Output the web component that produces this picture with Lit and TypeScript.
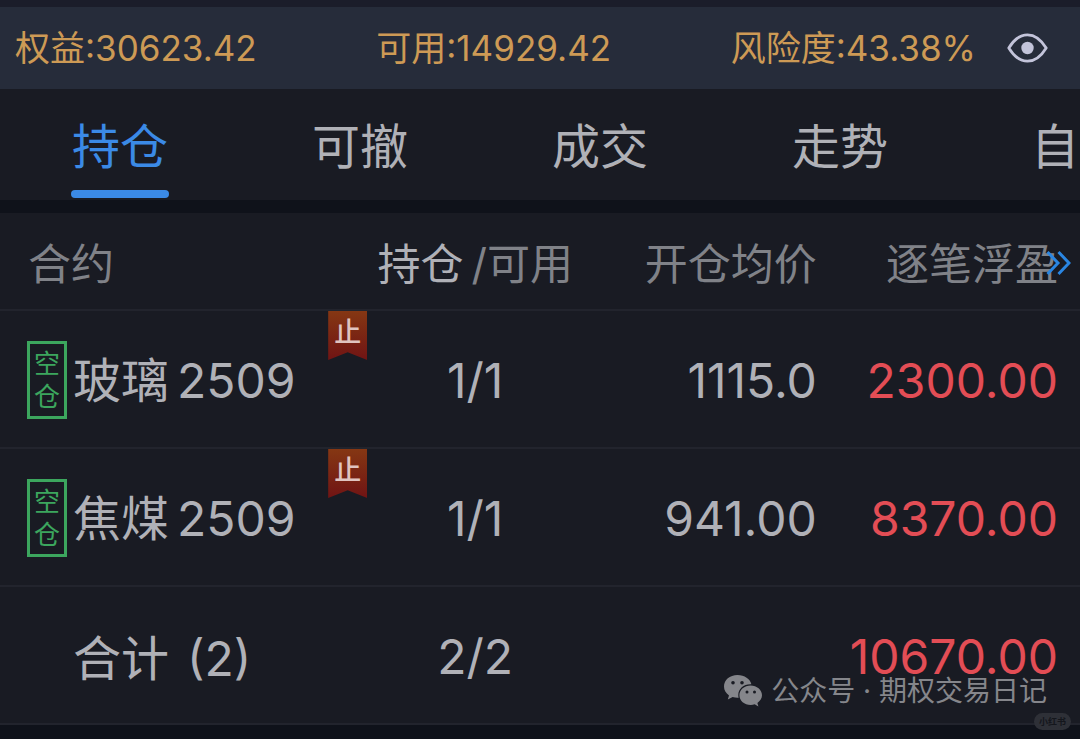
import { LitElement, html, css } from "lit";
import { customElement, state } from "lit/decorators.js";
import { classMap } from "lit/directives/class-map.js";

interface Position {
  name: string;
  code: string;
  volume: string;
  price: string;
  profit: string;
}

const TABS = ["持仓", "可撤", "成交", "走势", "自"];

const POSITIONS: Position[] = [
  { name: "玻璃", code: "2509", volume: "1/1", price: "1115.0", profit: "2300.00" },
  { name: "焦煤", code: "2509", volume: "1/1", price: "941.00", profit: "8370.00" },
];

@customElement("app-root")
export class AppRoot extends LitElement {
  @state() private active = 0;

  static styles = css`
    :host {
      display: block;
      min-height: 100vh;
      box-sizing: border-box;
      position: relative;
      overflow: hidden;
      background: #0f121a;
      color: #b0b1b7;
      font-family: Inter, "Noto Sans CJK SC", sans-serif;
      font-weight: 400;
    }
    button {
      margin: 0;
      padding: 0;
      border: 0;
      background: none;
      color: inherit;
      font: inherit;
      cursor: pointer;
    }
    .account {
      display: flex;
      justify-content: space-between;
      align-items: center;
      height: 82px;
      padding: 0 32px 0 15px;
      border-top: 7px solid #1b1d2a;
      background: #262c3a;
      color: #cd9a55;
      font-size: 35px;
      line-height: 48px;
      white-space: nowrap;
    }
    .risk {
      display: flex;
      align-items: center;
      gap: 31px;
    }
    .eye {
      display: flex;
      color: #c3c4da;
    }
    .tabs {
      display: grid;
      grid-template-columns: 2fr 2fr 2fr 2fr 1fr;
      height: 111px;
      background: #191b23;
      font-size: 48px;
      line-height: 64px;
    }
    .tab {
      display: flex;
      justify-content: center;
      white-space: nowrap;
    }
    .tab:last-child {
      justify-content: flex-end;
    }
    .label {
      padding: 26px 1px 0;
    }
    .active {
      color: #3b8ae6;
    }
    .bar {
      display: block;
      height: 8px;
      margin: 11px -1px 0;
      border-radius: 4px;
    }
    .active .bar {
      background: #3b8ae6;
    }
    .table {
      width: 100%;
      margin-top: 13px;
      border-collapse: separate;
      border-spacing: 0;
      table-layout: fixed;
      background: #191b23;
      font-size: 48px;
      line-height: 64px;
      white-space: nowrap;
    }
    th,
    td {
      box-sizing: border-box;
      height: 138px;
      padding: 0;
      border-bottom: 2px solid #22242d;
      font-weight: 400;
      text-align: right;
      vertical-align: middle;
    }
    .head {
      color: #808288;
      font-size: 43px;
    }
    .head th {
      height: 98px;
      padding-top: 6px;
    }
    .col-name {
      width: 34%;
      text-align: left;
    }
    .col-volume {
      width: 20%;
      text-align: center;
    }
    .col-price {
      width: 22%;
      padding-right: 4px;
    }
    .col-profit {
      width: 24%;
      padding-right: 22px;
    }
    .head .col-name {
      padding-left: 28px;
    }
    .strong {
      margin-right: 8px;
      color: #b0b1b7;
    }
    .more {
      position: absolute;
      top: 250px;
      right: 9px;
      display: flex;
      color: #2a86e2;
    }
    .contract {
      display: flex;
      align-items: center;
      position: relative;
      height: 136px;
      padding-left: 27px;
      gap: 6px;
    }
    .side {
      display: flex;
      flex-direction: column;
      justify-content: center;
      align-items: center;
      box-sizing: border-box;
      width: 40px;
      height: 78px;
      margin-top: 2px;
      border: 3px solid #3ca65e;
      color: #3ca65e;
      font-size: 26px;
      line-height: 33px;
    }
    .title {
      display: flex;
      gap: 8px;
      padding-top: 4px;
    }
    .stop {
      position: absolute;
      top: 0;
      right: 0;
      width: 39px;
      height: 49px;
      clip-path: polygon(0 0, 100% 0, 100% 100%, 50% 84%, 0 100%);
      background: linear-gradient(#853713, #701414);
      color: #e0c4c0;
      font-size: 27px;
      font-weight: 500;
      line-height: 44px;
      text-align: center;
    }
    .num {
      padding-top: 4px;
    }
    .profit {
      color: #e34d55;
    }
    .total {
      padding-top: 8px;
      padding-left: 73px;
    }
    .count {
      margin-left: 18px;
    }
    .credit {
      position: absolute;
      top: 671px;
      right: 33px;
      display: flex;
      align-items: center;
      gap: 8px;
      color: #85868b;
      font-size: 28px;
      line-height: 40px;
      white-space: nowrap;
    }
    .mark {
      position: absolute;
      top: 713px;
      right: 9px;
      padding: 0 5px;
      border-radius: 9px;
      background: #2e3037;
      color: #14161c;
      font-size: 9px;
      line-height: 17px;
      font-weight: 700;
    }
  `;

  private renderRow(p: Position) {
    return html`
      <tr>
        <td class="col-name">
          <div class="contract">
            <span class="side"><span>空</span><span>仓</span></span>
            <span class="title"><span>${p.name}</span><span>${p.code}</span></span>
            <span class="stop">止</span>
          </div>
        </td>
        <td class="num col-volume">${p.volume}</td>
        <td class="num col-price">${p.price}</td>
        <td class="num col-profit profit">${p.profit}</td>
      </tr>
    `;
  }

  render() {
    return html`
      <header class="account">
        <span>权益:30623.42</span>
        <span>可用:14929.42</span>
        <span class="risk">
          <span>风险度:43.38%</span>
          <button class="eye" aria-label="显示金额">
            <svg width="41" height="30" viewBox="0 0 41 30" fill="none" stroke="currentColor" stroke-width="2.8">
              <path d="M1.8 15C7 6.5 13 1.8 20.5 1.8S34 6.5 39.2 15C34 23.5 28 28.2 20.5 28.2S7 23.5 1.8 15Z" stroke-linejoin="round" />
              <circle cx="20.5" cy="15" r="6.2" fill="currentColor" stroke="none" />
            </svg>
          </button>
        </span>
      </header>
      <nav class="tabs">
        ${TABS.map(
          (t, i) => html`
            <button class=${classMap({ tab: true, active: i === this.active })} @click=${() => (this.active = i)}>
              <span class="label">${t}<span class="bar"></span></span>
            </button>
          `
        )}
      </nav>
      <table class="table">
        <thead class="head">
          <tr>
            <th class="col-name">合约</th>
            <th class="col-volume"><span class="strong">持仓</span>/可用</th>
            <th class="col-price">开仓均价</th>
            <th class="col-profit">逐笔浮盈</th>
          </tr>
        </thead>
        <tbody>
          ${POSITIONS.map((p) => this.renderRow(p))}
          <tr>
            <td class="col-name total">合计<span class="count">(2)</span></td>
            <td class="num col-volume">2/2</td>
            <td class="col-price"></td>
            <td class="num col-profit profit">10670.00</td>
          </tr>
        </tbody>
      </table>
      <button class="more" aria-label="更多列">
        <svg width="25" height="26" viewBox="0 0 25 26" fill="none" stroke="currentColor" stroke-width="3">
          <path d="M1.5 2L12 13L1.5 24M12.5 2L23 13L12.5 24" />
        </svg>
      </button>
      <div class="credit">
        <svg width="40" height="34" viewBox="0 0 40 34">
          <path fill="#85868b" d="M14.5 1C6.7 1 1 6 1 12.5c0 3.7 1.9 6.7 5 8.9L4.8 25.5l4.8-2.4c1.700.4 3.100.7 4.900.7h1.200a10 10 0 0 1-.4-2.800c0-6.100 5.300-10.800 12-10.800h1.100C27.200 5 21.500 1 14.500 1Z" />
          <path fill="#85868b" d="M39 21.300c0-5.400-5.300-9.700-11.300-9.700-6.400 0-11.300 4.300-11.300 9.700S21.300 31 27.700 31c1.300 0 2.700-.3 4-.7l3.700 2.100-1-3.500c2.700-2 4.600-4.600 4.600-7.600Z" />
          <g fill="#191b23">
            <circle cx="10" cy="8.800" r="1.800" />
            <circle cx="19" cy="8.800" r="1.800" />
            <circle cx="24" cy="18" r="1.500" />
            <circle cx="31.500" cy="18" r="1.500" />
          </g>
        </svg>
        <span>公众号 · 期权交易日记</span>
      </div>
      <span class="mark">小红书</span>
    `;
  }
}
